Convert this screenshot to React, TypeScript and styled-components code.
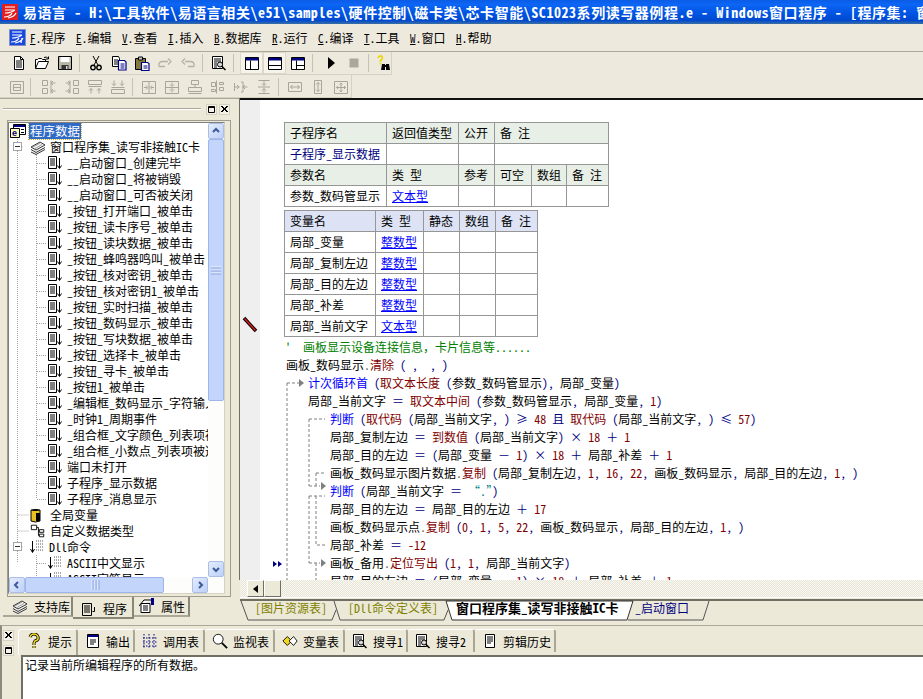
import React from "react";
import styled, { createGlobalStyle } from "styled-components";

const FACE = "#ece9d8";
const SHADOW = "#aca899";
const FONT = `"Noto Sans CJK SC", "Liberation Sans", sans-serif`;

const Global = createGlobalStyle`
  html, body { margin: 0; padding: 0; background: ${FACE}; }
  body {
    font-family: ${FONT};
    font-size: 12px;
    color: #000;
    font-feature-settings: "hwid";
    font-variant-ligatures: none;
  }
  * { box-sizing: border-box; }
`;

const Screen = styled.div`
  width: 923px; height: 699px; overflow: hidden;
  display: flex; flex-direction: column; background: ${FACE};
`;

/* title */
const TitleBar = styled.div`
  height: 24px; flex: none; display: flex; align-items: center; gap: 5px; padding-left: 2px;
  background: linear-gradient(180deg, #0a5ce6 0%, #0d66f5 18%, #0054e3 55%, #0049cf 85%, #3a6ea5 100%);
  color: #fff; font-weight: 700; font-size: 14px; white-space: pre; overflow: hidden;
`;
const TitleText = styled.span`
  letter-spacing: 0.55px; line-height: 24px;
`;

/* menu */
const MenuBar = styled.div`
  height: 28px; flex: none; display: flex; align-items: center; padding-left: 9px;
  border-bottom: 1px solid ${SHADOW}; background: #eee9dd;
`;
const MenuLogo = styled.svg`width: 17px; height: 17px; margin-right: 4px; flex: none;`;
const MenuItem = styled.span<{ $w: number }>`
  width: ${(p) => p.$w}px; flex: none; white-space: pre; line-height: 16px;
  u { text-decoration: underline; font-size: 11px; }
`;

/* toolbars */
const Toolbars = styled.div`
  height: 46px; flex: none; display: flex; flex-direction: column; background: #eee9dd;
`;
const ToolRow = styled.div<{ $w: number; $low?: boolean }>`
  height: 23px; width: ${(p) => p.$w}px; display: flex; align-items: center; padding-left: 7px;
  ${(p) => p.$low && `padding-top: 2px;`}
  border-right: 1px solid #d6d2c2; border-bottom: 1px solid #d6d2c2;
`;
const ToolBtn = styled.span<{ $on?: boolean; $w?: number }>`
  width: ${(p) => p.$w ?? 23}px; height: 22px; flex: none; display: flex; align-items: center; justify-content: center;
  ${(p) => p.$on && `background: #f5f3ea; border: 1px solid #dcd8c8;`}
`;
const ToolSep = styled.span<{ $w?: number }>`
  width: ${(p) => p.$w ?? 8}px; height: 18px; flex: none; position: relative;
  &::after { content: ""; position: absolute; left: 3px; top: 0; bottom: 0; width: 1px; background: #c5c2b2; }
`;
const Ico = styled.svg`width: 16px; height: 16px; flex: none; display: block;`;

/* main */
const Main = styled.div`height: 527px; flex: none; display: flex;`;
const LeftCol = styled.div`
  width: 240px; flex: none; display: flex; flex-direction: column; padding: 2px 0 0 3px; border-top: 1px solid ${SHADOW};
`;
const DockHead = styled.div`
  height: 16px; flex: none; display: flex; align-items: center; gap: 2px; padding-right: 10px;
`;
const DockLine = styled.div`flex: 1; height: 2px; border-top: 1px solid ${SHADOW}; border-bottom: 1px solid #fff; margin-right: 3px;`;
const DockBtn = styled.span`
  width: 11px; height: 11px; flex: none; display: flex; align-items: center; justify-content: center;
  background: #f3f1e8; border: 1px solid #d6d2c2;
`;
const DockBox = styled.div`
  margin: 3px 0 0 4px; width: 224px; height: 477px; flex: none; padding: 1px 5px 2px 0;
  border: 1px solid #a09d8e;
`;
const TreeFrame = styled.div`
  width: 217px; height: 472px; display: flex; flex-direction: column;
  border: 1px solid #808080; border-right-color: #d6d2c2; border-bottom-color: #d6d2c2; background: #fff;
`;
const TreeBody = styled.div`flex: 1; min-height: 0; display: flex;`;
const TreeList = styled.div`flex: 1; min-width: 0; overflow: hidden; position: relative; background: #fff;`;
const TreeGuides = styled.svg`position: absolute; left: 0; top: 0; pointer-events: none;`;
const TreeRow = styled.div<{ $pad: number }>`
  height: 16px; display: flex; align-items: center; white-space: pre; position: relative;
  padding-left: ${(p) => p.$pad}px;
`;
const TreeLabel = styled.span<{ $sel?: boolean }>`
  line-height: 16px; margin-left: 4px;
  ${(p) => p.$sel && `margin-left: 2px; padding: 0 1px; background: #316ac5; color: #fff; outline: 1px dotted #c9b038; font-size: 12.500px;`}
`;
const Expander = styled.span`
  position: absolute; left: 4px; top: 3px; width: 9px; height: 9px; background: #fff; border: 1px solid #a5a5a5;
  &::after { content: ""; position: absolute; left: 1px; right: 1px; top: 3px; height: 1px; background: #333; }
`;
const VBar = styled.div`width: 16px; flex: none; display: flex; flex-direction: column; background: #fdfdfb;`;
const HBar = styled.div`height: 16px; flex: none; display: flex; background: #fdfdfb; padding-right: 16px;`;
const SBtn = styled.span`
  width: 16px; height: 16px; flex: none; display: flex; align-items: center; justify-content: center;
  background: linear-gradient(135deg, #e4ecfd, #bed0f8); border: 1px solid #a9bfe8; border-radius: 2px;
`;
const Thumb = styled.div<{ $size: number; $dir: "h" | "v" }>`
  flex: none; display: flex; align-items: center; justify-content: center;
  ${(p) => (p.$dir === "v" ? `height: ${p.$size}px;` : `width: ${p.$size}px;`)}
  background: #c4d5fb; border: 1px solid #9db5e8; border-radius: 2px;
`;
const Spacer = styled.div`flex: 1;`;
const DockTabs = styled.div`height: 23px; flex: none; display: flex; align-items: flex-start;`;
const DockTab = styled.span<{ $w: number; $pad: number; $on?: boolean }>`
  width: ${(p) => p.$w}px; height: ${(p) => (p.$on ? 22 : 20)}px; flex: none; display: flex; align-items: center; gap: 6px; padding-left: ${(p) => p.$pad}px;
  white-space: pre;
  border-right: 2px solid #8a8778; border-bottom: 2px solid ${(p) => (p.$on ? "#8a8778" : SHADOW)};
  ${(p) => p.$on && `padding-top: 3px;`}
`;

/* editor */
const RightCol = styled.div`flex: 1; min-width: 0; display: flex; flex-direction: column;`;
const EditorView = styled.div`
  height: 482px; flex: none; display: flex; position: relative; overflow: hidden; background: #fff;
  border-top: 2px solid #111; box-shadow: -1px 0 0 #716f64;
`;
const Gutter = styled.div`width: 20px; flex: none; background: #efefef;`;
const Content = styled.div`flex: 1; min-width: 0; padding: 22px 0 0 24px; white-space: pre;`;
const Marks = styled.svg`position: absolute; left: 0; top: -2px; pointer-events: none;`;
const Grid = styled.table<{ $w: number }>`
  border-collapse: collapse; table-layout: fixed; width: ${(p) => p.$w + 1}px; margin-bottom: 3px;
`;
const Cell = styled.td`
  height: 21px; padding: 0 0 0 5px; border: 1px solid #969696; line-height: 18px; font-size: 12px; white-space: pre; overflow: hidden;
`;
const Head = styled(Cell)<{ $tone: string }>`background: ${(p) => p.$tone};`;
const TypeLink = styled.span`color: #0000ff; text-decoration: underline;`;
const SubName = styled.span`color: #000080;`;
const CodeWrap = styled.div`margin-top: -2px;`;
const Line = styled.div<{ $x: number }>`
  height: 18px; line-height: 18px; padding-left: ${(p) => p.$x}px; white-space: pre;
`;
const Kw = styled.span`color: #0000ff;`;
const Fn = styled.span`color: #800000;`;
const Op = styled.span`color: #000080;`;
const Str = styled.span`color: #008080;`;
const Cm = styled.span`color: #008000;`;
const Dot = styled.span`color: #666;`;
/* full-width glyphs keep their 12px cell */
const W = styled.span`font-feature-settings: normal;`;

const EHBar = styled.div`
  height: 17px; flex: none; display: flex; padding-left: 7px;
  background: repeating-conic-gradient(#e9e6d8 0% 25%, #f8f7f1 0% 50%) 0 0 / 2px 2px;
`;
const EBtn = styled.span`
  width: 17px; height: 17px; flex: none; display: flex; align-items: center; justify-content: center;
  background: ${FACE}; border: 1px solid; border-color: #fff #716f64 #716f64 #fff;
`;
const EdTabs = styled.div`height: 23px; flex: none; display: flex; position: relative; border-top: 1px solid #fff;`;
const EdShapes = styled.svg`position: absolute; left: 0; top: 0; pointer-events: none;`;
const EdTab = styled.span<{ $w: number; $pad: number; $c: string; $bold?: boolean }>`
  width: ${(p) => p.$w}px; flex: none; position: relative; padding: 1px 0 0 ${(p) => p.$pad}px; line-height: 17px; white-space: pre;
  color: ${(p) => p.$c};
  ${(p) => p.$bold && `font-weight: 700; font-size: 13px;`}
`;

/* bottom */
const Bottom = styled.div`
  flex: 1; min-height: 0; display: flex; border-top: 1px solid ${SHADOW}; border-left: 2px solid #8c8a7e;
`;
const SideBtns = styled.div`
  width: 16px; flex: none; display: flex; flex-direction: column; gap: 4px; padding: 4px 0 0 1px;
`;
const BottomMain = styled.div`flex: 1; min-width: 0; display: flex; flex-direction: column; padding-top: 3px;`;
const InfoTabs = styled.div`height: 26px; flex: none; display: flex; align-items: flex-start;`;
const InfoTab = styled.span<{ $w: number; $on?: boolean }>`
  width: ${(p) => p.$w}px; height: ${(p) => (p.$on ? 26 : 23)}px; flex: none; display: flex; align-items: center; gap: 5px; padding-left: 7px;
  white-space: pre;
  border-top: 1px solid #fff; border-right: 2px solid #a9a695; border-radius: 3px 3px 0 0;
  ${(p) => p.$on && `border-left: 1px solid #fff; padding-bottom: 3px; gap: 6px;`}
`;
const InfoText = styled.div`
  flex: 1; min-height: 0; background: #fff; padding: 0 0 0 2px; margin-left: 3px; line-height: 15px; font-size: 12px;
  border-top: 2px solid #716f64; border-left: 2px solid #716f64;
`;

/* ---------- icons ---------- */
const Doc = () => (
  <Ico viewBox="0 0 16 16"><path d="M3.5 1.5h6l3 3v10h-9z" fill="#fff" stroke="#000" /><path d="M5 6h6M5 8h6M5 10h6M5 12h6M9.5 1.5v3h3" stroke="#000" fill="none" /></Ico>
);
const OpenI = () => (
  <Ico viewBox="0 0 16 16"><path d="M1.5 13.5v-9h2l1-1h3l1 1h3v2" fill="#fff" stroke="#000" /><path d="M1.5 13.5l3-7h10l-3 7z" fill="#fff" stroke="#000" /><path d="M10 2.5q3-1.5 4 1M14.5 1.5v2.5h-2.5" fill="none" stroke="#000" /></Ico>
);
const SaveI = () => (
  <Ico viewBox="0 0 16 16"><path d="M1.5 1.5h13v13h-13z" fill="#b8b6a6" stroke="#000" /><path d="M3.5 2h9v5h-9z" fill="#fff" /><path d="M4.500 10h7v4.500h-7z" fill="#333" /><path d="M9 11h1.500v3h-1.500z" fill="#ddd" /></Ico>
);
const CutI = () => (
  <Ico viewBox="0 0 16 16"><path d="M5 1l5 9M11 1l-5 9" stroke="#000" fill="none" /><circle cx="5" cy="12.500" r="2.200" fill="none" stroke="#000" strokeWidth="1.400" /><circle cx="11" cy="12.500" r="2.200" fill="none" stroke="#000" strokeWidth="1.400" /></Ico>
);
const CopyI = () => (
  <Ico viewBox="0 0 16 16"><path d="M1.500 1.500h6l1 2v8h-7z" fill="#fff" stroke="#000" /><path d="M3 5h4M3 7h4M3 9h4" stroke="#000" /><path d="M7.500 5.500h6l1.500 1.500v8h-7.500z" fill="#fff" stroke="#000080" strokeWidth="1.200" /><path d="M9.500 9h4M9.500 11h4M9.500 13h4" stroke="#000080" /></Ico>
);
const PasteI = () => (
  <Ico viewBox="0 0 16 16"><path d="M1.500 3.500h10v11h-10z" fill="#857a3a" stroke="#000" /><path d="M4.500 2h4v3h-4z" fill="#ccc" stroke="#000" /><path d="M7.500 7.500h6l1.500 1v7h-7.500z" fill="#fff" stroke="#000080" strokeWidth="1.200" /><path d="M9.500 11h4M9.500 13h4" stroke="#000080" /></Ico>
);
const ArrowG = ({ flip }: { flip?: boolean }) => (
  <Ico viewBox="0 0 16 16" style={flip ? { transform: "scaleX(-1)" } : undefined}><path d="M2 11.500q-1-5 4-5h5M11 3.500l3 3-3 3M2 11.500h6" fill="none" stroke="#b4b2a4" strokeWidth="1.300" /></Ico>
);
const FindI = () => (
  <Ico viewBox="0 0 16 16"><path d="M1.500 1.500h10v12h-10z" fill="#fff" stroke="#000" /><path d="M3 4h7M3 6h7M3 8h3M3 10h3M3 12h3" stroke="#000" /><circle cx="9" cy="9.500" r="2.500" fill="#d8d8d8" stroke="#000" /><path d="M11 11.500l3.500 3.500" stroke="#000" strokeWidth="1.500" /></Ico>
);
const Pane = ({ v }: { v: number }) => (
  <Ico viewBox="0 0 16 16">
    <path d="M1.500 2.500h13v12h-13z" fill="#fff" stroke="#000" />
    <path d="M2 3h12v2.500h-12z" fill="#000080" />
    {v === 0 && <path d="M6.500 5.500v9" stroke="#000" />}
    {v === 1 && <path d="M1.500 10.500h13" stroke="#000" />}
    {v === 2 && <path d="M6.500 5.500v9M6.500 10.500h8" stroke="#000" />}
  </Ico>
);
const PlayI = () => <Ico viewBox="0 0 16 16"><path d="M5 2l7 6-7 6z" fill="#000" /></Ico>;
const StopI = () => <Ico viewBox="0 0 16 16"><path d="M3.500 3.500h9v9h-9z" fill="#aca899" /></Ico>;
const HelpI = () => (
  <Ico viewBox="0 0 16 16"><path d="M1 3q1-2.500 3-2t1 3l-1.500 1.500v1.500M3.500 8v1.500" fill="none" stroke="#e8d800" strokeWidth="1.700" /><path d="M5 9h3v6h-4zM9 9h3l1 6h-4z" fill="#000" /><path d="M7 10h3v2h-3z" fill="#000" /></Ico>
);
const grayPaths = [
  "M1.500 2.500h13v12h-13zM4.500 5.500h7v6h-7zM4.500 8.500h7",
  "M1.500 1.500h5v5h-5zM1.500 9.500h5v5h-5zM10 1.500v13M14.500 4h-4M12 2l-2 2 2 2M14.500 12h-4M12 10l-2 2 2 2",
  "M9.500 1.500h5v5h-5zM9.500 9.500h5v5h-5zM6 1.500v13M1.500 4h4M4 2l2 2-2 2M1.500 12h4M4 10l2 2-2 2",
  "M1.500 1.500h13v4h-13zM4 9.500v5M2 11.500l2-2 2 2M12 9.500v5M10 11.500l2-2 2 2M1.500 7.500h13",
  "M1.500 10.500h13v4h-13zM4 1.500v5M2 4.500l2 2 2-2M12 1.500v5M10 4.500l2 2 2-2M1.500 8.500h13",
  "M1.500 2.500h13v12h-13zM8 2.500v12M3 8.500h3M5 6.500l2 2-2 2M13 8.500h-3M11 6.500l-2 2 2 2",
  "M1.500 2.500h13v12h-13zM1.500 8.500h13M8 3.500v3M6 5.500l2 2 2-2M8 13.500v-3M6 11.500l2-2 2 2",
  "M4.500 1.500h7v4h-7zM1.500 8.500h13v4h-13zM8 5.500v3M1.500 14.500h13",
  "M6.500 1.500v13M1.500 3.500h4v4h-4zM1.500 10.500h4v2h-4zM9.500 3.500h4v2h-4zM9.500 8.500h4v3h-4z",
  "M1.500 8h5M4 6l2 2-2 2M14.500 8h-5M12 6l-2 2 2 2M1.500 4v8M8 3h2v10h-2",
  "M8 1.500v5M6 4.500l2 2 2-2M8 14.500v-5M6 11.500l2-2 2 2M2.500 1.500h11M2.500 14.500h11M2 8h12",
  "M1.500 3.500h13v9h-13zM3.500 8h9M5.500 6l-2 2 2 2M10.500 6l2 2-2 2",
  "M4.500 1.500h7v13h-7zM8 3.500v9M6 5.500l2-2 2 2M6 10.500l2 2 2-2",
  "M1.500 2.500h13v12h-13zM8 4v9M3.500 8.500h9M6.500 5.500l1.500-1.500 1.500 1.500M6.500 11.500l1.500 1.500 1.500-1.500M5 7l-1.500 1.500 1.500 1.500M11 7l1.500 1.500-1.500 1.500",
];
const GrayI = ({ i }: { i: number }) => (
  <Ico viewBox="0 0 16 16"><path d={grayPaths[i]} fill="none" stroke="#a8a696" /></Ico>
);

const EvtI = () => (
  <Ico viewBox="0 0 16 16"><path d="M1.500 1.500h8v12h-8zM3 4h5M3 6h5M3 8h5M3 10h5M12.500 3v10M10.500 10.500l2 3 2-3" fill="none" stroke="#000" /></Ico>
);
const RootI = () => (
  <Ico viewBox="0 0 18 16" style={{ width: 18 }}><path d="M4.500 1.500h12v10h-12z" fill="#fff" stroke="#000" /><path d="M5 2h11v2h-11z" fill="#000080" /><path d="M1.500 5.500h9v9h-9z" fill="#fff8c0" stroke="#000" /><text x="3" y="13" fontSize="9" fontWeight="700" fill="#000080" fontFamily="Liberation Sans">e</text><path d="M12 6h3v1h-3zM12 9h3v1h-3z" fill="#000" /></Ico>
);
const StackI = () => (
  <Ico viewBox="0 0 16 16"><path d="M1 8l9-5 5 3-9 5zM1 10.500l5 3 9-5M1 13l5 2.500 9-5" fill="#f2f2f2" stroke="#222" strokeWidth="0.900" /><path d="M3 8l7-4M5 9.500l7-4" stroke="#777" strokeWidth="0.700" /></Ico>
);
const DbI = () => (
  <Ico viewBox="0 0 16 16"><path d="M1 3h9v11q-4.500 2-9 0z" fill="#e8c020" stroke="#000" /><path d="M1 3q4.500-2 9 0q-4.500 2-9 0zM6 6h4v8h-4z" fill="#000" /></Ico>
);
const TypeI = () => (
  <Ico viewBox="0 0 18 16"><path d="M1.500 1.500h6v5h-6zM10.500 6.500h5v3h-5zM10.500 11.500h5v3h-5zM7.500 4h2v9h1M9.500 8h1" fill="#fff" stroke="#000" /></Ico>
);
const DllI = () => (
  <Ico viewBox="0 0 16 16"><path d="M3.500 2v11M1.500 10l2 3.500 2-3.500" fill="none" stroke="#000" /><path d="M7 2h8M7 5h8M7 8h8M7 11h8" stroke="#555" strokeDasharray="1 1" /></Ico>
);
const Logo = () => (
  <MenuLogo viewBox="0 0 17 17"><path d="M.5.500h16v16h-16z" fill="#1848e0" stroke="#8090c0" /><path d="M3 3h10M3 6h10M3 9q6 0 10-3M2 13q6 0 8-4M6 14q6-1 8-5M13 9l-1 5" fill="none" stroke="#fff" strokeWidth="1.200" /></MenuLogo>
);
const TitleLogo = () => (
  <Ico viewBox="0 0 16 16"><path d="M0 0h16v16h-16z" fill="#e02020" /><path d="M3 3h10M3 6h10M3 9q6 0 10-3M2 13q6 0 8-4M6 14q6-1 8-5" fill="none" stroke="#fff" strokeWidth="1.200" /></Ico>
);
const Chev = ({ d }: { d: "u" | "d" | "l" | "r" }) => {
  const p = { u: "M2 6l3-3 3 3", d: "M2 4l3 3 3-3", l: "M6 2l-3 3 3 3", r: "M4 2l3 3-3 3" }[d];
  return <svg width="10" height="10" viewBox="0 0 10 10"><path d={p} fill="none" stroke="#3a5a9a" strokeWidth="2" /></svg>;
};
const Grip = ({ v }: { v?: boolean }) => (
  <svg width={10} height={10} viewBox="0 0 10 10"><path d={v ? "M0 2h10M0 5h10M0 8h10" : "M2 0v10M5 0v10M8 0v10"} stroke="#eef3ff" /><path d={v ? "M0 3h10M0 6h10M0 9h10" : "M3 0v10M6 0v10M9 0v10"} stroke="#8ca6dc" /></svg>
);
const CloseX = () => <svg width="7" height="7" viewBox="0 0 7 7"><path d="M0 0l6 6M6 0l-6 6M1 0l6 6M7 0l-6 6" stroke="#000" /></svg>;
const MaxBox = () => <svg width="7" height="7" viewBox="0 0 7 7"><path d="M.500.500h6v6h-6zM.500 1.500h6" fill="none" stroke="#000" /></svg>;

const QI = () => <Ico viewBox="0 0 16 16"><path d="M4 4q1-3 4-3t4 3-3 4l-1 2v2M8 13v2" fill="none" stroke="#000" strokeWidth="3" /><path d="M4 4q1-3 4-3t4 3-3 4l-1 2v2M8 13v2" fill="none" stroke="#f8e020" strokeWidth="1.500" /></Ico>;
const OutI = () => <Ico viewBox="0 0 16 16"><path d="M2.500 1.500h11v13h-11z" fill="#fff" stroke="#000" /><path d="M3 2h10v2h-10z" fill="#000080" /><path d="M5 7h6M5 9h6M5 11h4" stroke="#000" /></Ico>;
const CallI = () => <Ico viewBox="0 0 16 16"><path d="M2 1v14M7 1v14M12 1v14M1 5h14M1 9h14M1 13h14" stroke="#000080" strokeDasharray="1.500 1.500" /></Ico>;
const WatchI = () => <Ico viewBox="0 0 18 18"><circle cx="7" cy="7" r="5.500" fill="#fff" stroke="#000" /><path d="M11 11l6 6" stroke="#000" strokeWidth="2" /></Ico>;
const VarI = () => <Ico viewBox="0 0 18 16"><path d="M1 8l5-5 5 5-5 5z" fill="#f0d820" stroke="#000" /><path d="M8 8l5-5 4 5-4 5z" fill="#fff" stroke="#000" /></Ico>;
const ClipI = () => <Ico viewBox="0 0 16 16"><path d="M3.500 1.500h9v13h-9z" fill="#fff" stroke="#000" /><path d="M5 4h6M5 6h6M5 8h6M5 10h4" stroke="#000" /></Ico>;
const ProgI = () => <Ico viewBox="0 0 16 16"><path d="M1.500 2.500h9v12h-9zM3 5h6M3 7h6M3 9h6M3 11h6M13.500 6v4.500h-2" fill="none" stroke="#000" /></Ico>;
const PropI = () => <Ico viewBox="0 0 16 16"><path d="M2 5.500h9v9h-9zM0 8l5-6h7" fill="#fff" stroke="#000" /><path d="M4 8h5M4 10h5M4 12h5" stroke="#000" /><path d="M12 0h3v7h-3z" fill="#000080" /></Ico>;

/* ---------- data ---------- */
const events = [
  "__启动窗口_创建完毕", "__启动窗口_将被销毁", "__启动窗口_可否被关闭", "_按钮_打开端口_被单击", "_按钮_读卡序号_被单击",
  "_按钮_读块数据_被单击", "_按钮_蜂鸣器鸣叫_被单击", "_按钮_核对密钥_被单击", "_按钮_核对密钥1_被单击", "_按钮_实时扫描_被单击",
  "_按钮_数码显示_被单击", "_按钮_写块数据_被单击", "_按钮_选择卡_被单击", "_按钮_寻卡_被单击", "_按钮1_被单击",
  "_编辑框_数码显示_字符输入", "_时钟1_周期事件", "_组合框_文字颜色_列表项被选择", "_组合框_小数点_列表项被选择",
  "端口未打开", "子程序_显示数据", "子程序_消息显示",
];
const menus: [string, string, number][] = [
  ["F", "程序", 46], ["E", "编辑", 46], ["V", "查看", 46], ["I", "插入", 46], ["B", "数据库", 58],
  ["R", "运行", 46], ["C", "编译", 46], ["T", "工具", 46], ["W", "窗口", 46], ["H", "帮助", 46],
];
const vars: [string, string][] = [["局部_变量", "整数型"], ["局部_复制左边", "整数型"], ["局部_目的左边", "整数型"], ["局部_补差", "整数型"], ["局部_当前文字", "文本型"]];
const GREEN = "#e8efe6";
const LILAC = "#dde3f5";

const dash =
  "M47 285h12M47 285v197M69 321h16M69 321v67M69 388h11M69 398h16M69 398v67M69 465h11M76 375h9M76 375v13M76 398v49h9M76 465v17";

const Eq = () => <Op> <W>＝</W> </Op>;
const Plus = () => <Op> <W>＋</W> </Op>;
const Minus = () => <Op> <W>－</W> </Op>;
const Times = () => <Op>) <W>×</W> </Op>;
const Ge = ({ c }: { c: string }) => <Op>, ) <W>{c}</W> </Op>;

export default function App() {
  return (
    <Screen>
      <Global />
      <TitleBar>
        <TitleLogo />
        <TitleText>易语言 - H:\工具软件\易语言相关\e51\samples\硬件控制\磁卡类\芯卡智能\SC1023系列读写器例程.e - Windows窗口程序 - [程序集: 窗口程序集_读写非接触IC卡]</TitleText>
      </TitleBar>

      <MenuBar>
        <Logo />
        {menus.map(([k, t, w]) => (
          <MenuItem key={k} $w={w}><u>{k}</u>.{t}</MenuItem>
        ))}
      </MenuBar>

      <Toolbars>
        <ToolRow $w={392}>
          <ToolBtn><Doc /></ToolBtn><ToolBtn><OpenI /></ToolBtn><ToolBtn><SaveI /></ToolBtn><ToolSep />
          <ToolBtn><CutI /></ToolBtn><ToolBtn><CopyI /></ToolBtn><ToolBtn><PasteI /></ToolBtn><ToolBtn><ArrowG /></ToolBtn><ToolBtn><ArrowG flip /></ToolBtn><ToolSep />
          <ToolBtn><FindI /></ToolBtn><ToolSep $w={10} />
          <ToolBtn $on><Pane v={0} /></ToolBtn><ToolBtn $on><Pane v={1} /></ToolBtn><ToolBtn><Pane v={2} /></ToolBtn><ToolSep $w={10} />
          <ToolBtn><PlayI /></ToolBtn><ToolBtn><StopI /></ToolBtn><ToolSep />
          <ToolBtn><HelpI /></ToolBtn>
        </ToolRow>
        <ToolRow $w={352} $low>
          <ToolBtn $w={20}><GrayI i={0} /></ToolBtn><ToolSep $w={10} />
          <ToolBtn><GrayI i={1} /></ToolBtn><ToolBtn><GrayI i={2} /></ToolBtn><ToolBtn><GrayI i={3} /></ToolBtn><ToolBtn><GrayI i={4} /></ToolBtn><ToolSep />
          <ToolBtn><GrayI i={5} /></ToolBtn><ToolBtn><GrayI i={6} /></ToolBtn><ToolBtn><GrayI i={7} /></ToolBtn><ToolBtn><GrayI i={8} /></ToolBtn><ToolBtn><GrayI i={9} /></ToolBtn><ToolBtn><GrayI i={10} /></ToolBtn><ToolSep />
          <ToolBtn><GrayI i={11} /></ToolBtn><ToolBtn><GrayI i={12} /></ToolBtn><ToolBtn><GrayI i={13} /></ToolBtn>
        </ToolRow>
      </Toolbars>

      <Main>
        <LeftCol>
          <DockHead>
            <DockLine />
            <DockBtn><MaxBox /></DockBtn>
            <DockBtn><CloseX /></DockBtn>
          </DockHead>
          <DockBox>
            <TreeFrame>
              <TreeBody>
                <TreeList>
                  <TreeGuides width="200" height="460">
                    <path d="M8.500 8v432M27.500 32v344M8.500 24h6M8.500 392h12M8.500 408h12M8.500 424h6M27.500 432v24M28 440.500h10M28 456.500h10" fill="none" stroke="#a0a0a0" strokeDasharray="1 1" />
                    {events.map((e, i) => <path key={e} d={`M28 ${40.5 + i * 16}h10`} stroke="#a0a0a0" strokeDasharray="1 1" />)}
                  </TreeGuides>
                  <TreeRow $pad={0}><RootI /><TreeLabel $sel>程序数据</TreeLabel></TreeRow>
                  <TreeRow $pad={21}><Expander /><StackI /><TreeLabel>窗口程序集_读写非接触IC卡</TreeLabel></TreeRow>
                  {events.map((e) => (
                    <TreeRow $pad={38} key={e}><EvtI /><TreeLabel>{e}</TreeLabel></TreeRow>
                  ))}
                  <TreeRow $pad={21}><DbI /><TreeLabel>全局变量</TreeLabel></TreeRow>
                  <TreeRow $pad={21}><TypeI /><TreeLabel>自定义数据类型</TreeLabel></TreeRow>
                  <TreeRow $pad={20}><Expander /><DllI /><TreeLabel>Dll命令</TreeLabel></TreeRow>
                  <TreeRow $pad={38}><DllI /><TreeLabel>ASCII中文显示</TreeLabel></TreeRow>
                  <TreeRow $pad={38}><DllI /><TreeLabel>ASCII字符显示</TreeLabel></TreeRow>
                </TreeList>
                <VBar>
                  <SBtn><Chev d="u" /></SBtn>
                  <Thumb $dir="v" $size={262}><Grip v /></Thumb>
                  <Spacer />
                  <SBtn><Chev d="d" /></SBtn>
                </VBar>
              </TreeBody>
              <HBar>
                <SBtn><Chev d="l" /></SBtn>
                <Thumb $dir="h" $size={139}><Grip /></Thumb>
                <Spacer />
                <SBtn><Chev d="r" /></SBtn>
              </HBar>
            </TreeFrame>
          </DockBox>
          <DockTabs>
            <DockTab $w={70} $pad={9}><StackI />支持库</DockTab>
            <DockTab $w={61} $pad={8} $on><ProgI />程序</DockTab>
            <DockTab $w={56} $pad={5}><PropI />属性</DockTab>
          </DockTabs>
        </LeftCol>

        <RightCol>
          <EditorView>
            <Gutter />
            <Content>
              <Grid $w={324}>
                <colgroup><col width={102} /><col width={72} /><col width={36} /><col width={37} /><col width={35} /><col width={42} /></colgroup>
                <tbody>
                  <tr><Head $tone={GREEN}>子程序名</Head><Head $tone={GREEN}>返回值类型</Head><Head $tone={GREEN}>公开</Head><Head $tone={GREEN} colSpan={3}>备 注</Head></tr>
                  <tr><Cell><SubName>子程序_显示数据</SubName></Cell><Cell /><Cell /><Cell colSpan={3} /></tr>
                  <tr><Head $tone={GREEN}>参数名</Head><Head $tone={GREEN}>类 型</Head><Head $tone={GREEN}>参考</Head><Head $tone={GREEN}>可空</Head><Head $tone={GREEN}>数组</Head><Head $tone={GREEN}>备 注</Head></tr>
                  <tr><Cell>参数_数码管显示</Cell><Cell><TypeLink>文本型</TypeLink></Cell><Cell /><Cell /><Cell /><Cell /></tr>
                </tbody>
              </Grid>
              <Grid $w={253}>
                <colgroup><col width={91} /><col width={48} /><col width={36} /><col width={36} /><col width={42} /></colgroup>
                <tbody>
                  <tr><Head $tone={LILAC}>变量名</Head><Head $tone={LILAC}>类 型</Head><Head $tone={LILAC}>静态</Head><Head $tone={LILAC}>数组</Head><Head $tone={LILAC}>备 注</Head></tr>
                  {vars.map(([n, t]) => (
                    <tr key={n}><Cell>{n}</Cell><Cell><TypeLink>{t}</TypeLink></Cell><Cell /><Cell /><Cell /></tr>
                  ))}
                </tbody>
              </Grid>
              <CodeWrap>
                <Line $x={1}><Cm>{"'  画板显示设备连接信息"}<W>，</W>卡片信息等......</Cm></Line>
                <Line $x={2}>画板_数码显示<Dot>.</Dot><Fn>清除</Fn><Op>{" ( ,  , )"}</Op></Line>
                <Line $x={24}><Kw>计次循环首</Kw><Op> (</Op><Fn>取文本长度</Fn><Op> (</Op>参数_数码管显示<Op>), </Op>局部_变量<Op>)</Op></Line>
                <Line $x={24}>局部_当前文字<Eq /><Fn>取文本中间</Fn><Op> (</Op>参数_数码管显示<Op>, </Op>局部_变量<Op>, </Op><Fn>1</Fn><Op>)</Op></Line>
                <Line $x={46}><Kw>判断</Kw><Op> (</Op><Fn>取代码</Fn><Op> (</Op>局部_当前文字<Ge c="≥" /><Fn>48</Fn><Op> 且 </Op><Fn>取代码</Fn><Op> (</Op>局部_当前文字<Ge c="≤" /><Fn>57</Fn><Op>)</Op></Line>
                <Line $x={46}>局部_复制左边<Eq /><Fn>到数值</Fn><Op> (</Op>局部_当前文字<Times /><Fn>18</Fn><Plus /><Fn>1</Fn></Line>
                <Line $x={46}>局部_目的左边<Eq /><Op>(</Op>局部_变量<Minus /><Fn>1</Fn><Times /><Fn>18</Fn><Plus />局部_补差<Plus /><Fn>1</Fn></Line>
                <Line $x={46}>画板_数码显示图片数据<Dot>.</Dot><Fn>复制</Fn><Op> (</Op>局部_复制左边<Op>, </Op><Fn>1</Fn><Op>, </Op><Fn>16</Fn><Op>, </Op><Fn>22</Fn><Op>, </Op>画板_数码显示<Op>, </Op>局部_目的左边<Op>, </Op><Fn>1</Fn><Op>, )</Op></Line>
                <Line $x={46}><Kw>判断</Kw><Op> (</Op>局部_当前文字<Eq /><Str><W>“</W>.<W>”</W></Str><Op>)</Op></Line>
                <Line $x={46}>局部_目的左边<Eq />局部_目的左边<Plus /><Fn>17</Fn></Line>
                <Line $x={46}>画板_数码显示点<Dot>.</Dot><Fn>复制</Fn><Op> (</Op><Fn>0</Fn><Op>, </Op><Fn>1</Fn><Op>, </Op><Fn>5</Fn><Op>, </Op><Fn>22</Fn><Op>, </Op>画板_数码显示<Op>, </Op>局部_目的左边<Op>, </Op><Fn>1</Fn><Op>, )</Op></Line>
                <Line $x={46}>局部_补差<Eq /><Fn>-12</Fn></Line>
                <Line $x={46}>画板_备用<Dot>.</Dot><Fn>定位写出</Fn><Op> (</Op><Fn>1</Fn><Op>, </Op><Fn>1</Fn><Op>, </Op>局部_当前文字<Op>)</Op></Line>
                <Line $x={46}>局部_目的左边<Eq /><Op>(</Op>局部_变量<Minus /><Fn>1</Fn><Times /><Fn>18</Fn><Plus />局部_补差<Plus /><Fn>1</Fn></Line>
              </CodeWrap>
            </Content>
            <Marks width="683" height="484">
              <path d={dash} fill="none" stroke="#808080" strokeDasharray="3 2" />
              <path d="M59 281l5 4-5 4zM81 384l5 4-5 4zM81 461l5 4-5 4z" fill="#808080" />
              <path d="M4 220l12 13" stroke="#000" strokeWidth="3.500" />
              <path d="M4.500 220.500l11 12" stroke="#e01818" strokeWidth="1.500" />
              <path d="M33 463l4 3-4 3zM38 463l4 3-4 3z" fill="#000080" />
            </Marks>
          </EditorView>
          <EHBar>
            <EBtn><svg width="6" height="8" viewBox="0 0 6 8"><path d="M5 0v8L0 4z" fill="#000" /></svg></EBtn>
            <EBtn />
          </EHBar>
          <EdTabs>
            <EdShapes width="683" height="23">
              <path d="M0 2h683" stroke="#716f64" strokeWidth="2" />
              <path d="M1 3l7 19h84l4-10M94 3l6 19h104l4-10" fill="none" stroke="#555" />
              <path d="M206 3l6 19h175l6-19z" fill="#fff" stroke="#333" />
              <path d="M388 22h75l6-19" fill="none" stroke="#555" />
            </EdShapes>
            <EdTab $w={108} $pad={15} $c="#808000">[图片资源表]</EdTab>
            <EdTab $w={98} $pad={0} $c="#808000">[Dll命令定义表]</EdTab>
            <EdTab $w={189} $pad={10} $c="#000" $bold>窗口程序集_读写非接触IC卡</EdTab>
            <EdTab $w={70} $pad={0} $c="#000080">_启动窗口</EdTab>
          </EdTabs>
        </RightCol>
      </Main>

      <Bottom>
        <SideBtns>
          <DockBtn><CloseX /></DockBtn>
          <DockBtn><MaxBox /></DockBtn>
        </SideBtns>
        <BottomMain>
          <InfoTabs>
            <InfoTab $w={60} $on><QI />提示</InfoTab>
            <InfoTab $w={57}><OutI />输出</InfoTab>
            <InfoTab $w={70}><CallI />调用表</InfoTab>
            <InfoTab $w={70}><WatchI />监视表</InfoTab>
            <InfoTab $w={70}><VarI />变量表</InfoTab>
            <InfoTab $w={63}><FindI />搜寻1</InfoTab>
            <InfoTab $w={67}><FindI />搜寻2</InfoTab>
            <InfoTab $w={81}><ClipI />剪辑历史</InfoTab>
          </InfoTabs>
          <InfoText>记录当前所编辑程序的所有数据。</InfoText>
        </BottomMain>
      </Bottom>
    </Screen>
  );
}
